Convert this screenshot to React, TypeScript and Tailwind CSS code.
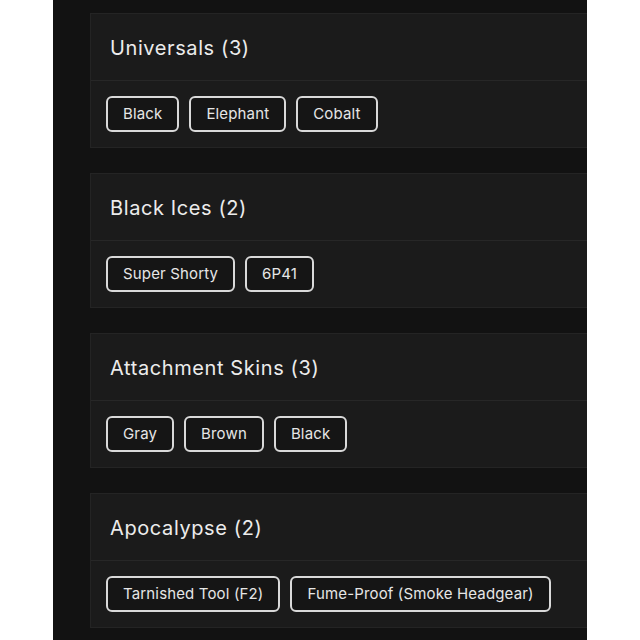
const groups = [
  { title: 'Universals (3)', items: ['Black', 'Elephant', 'Cobalt'] },
  { title: 'Black Ices (2)', items: ['Super Shorty', '6P41'] },
  { title: 'Attachment Skins (3)', items: ['Gray', 'Brown', 'Black'] },
  { title: 'Apocalypse (2)', items: ['Tarnished Tool (F2)', 'Fume-Proof (Smoke Headgear)'] },
];

function Chip({ label }: { label: string }) {
  return (
    <span className="flex h-[36px] items-center rounded-[6px] border-2 border-[#d9d9d9] bg-[#151515] px-[15px] text-[15px] tracking-[0.01em] text-[#e6e6e6]">
      {label}
    </span>
  );
}

export default function App() {
  return (
    <div className="flex h-[640px] w-[640px] bg-white font-['Inter','Noto_Sans',sans-serif]">
      <div className="ml-[53px] h-full w-[534px] overflow-hidden bg-[#121212] pl-[37px] pt-[13px]">
        <div className="flex w-[560px] flex-col gap-[25px]">
          {groups.map((g) => (
            <section key={g.title} className="border border-[#242424] bg-[#1b1b1b]">
              <div className="flex h-[67px] items-center border-b border-[#272727] pl-[19px] pt-[1px]">
                <h2 className="text-[20px] font-normal tracking-[0.03em] text-[#ececec]">{g.title}</h2>
              </div>
              <div className="flex gap-[10px] px-[15px] pb-[15px] pt-[15px]">
                {g.items.map((item) => (
                  <Chip key={item} label={item} />
                ))}
              </div>
            </section>
          ))}
        </div>
      </div>
    </div>
  );
}
